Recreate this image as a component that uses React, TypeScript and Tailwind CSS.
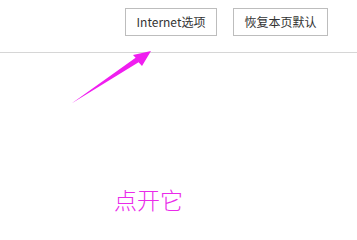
export default function App() {
  return (
    <div
      className="relative w-[357px] h-[220px] bg-white overflow-hidden"
      style={{ fontFamily: '"Noto Sans CJK SC", "Noto Sans", sans-serif' }}
    >
      {/* top toolbar */}
      <div className="h-[53px] border-b border-[#d6d6d6] flex justify-end items-start pt-[8px] pr-[29px] gap-[16px]">
        <button className="h-[28px] w-[92px] border border-[#bdbdbd] bg-white text-[12px] text-[#333] leading-none">
          Internet选项
        </button>
        <button className="h-[28px] w-[95px] border border-[#bdbdbd] bg-white text-[12px] text-[#333] leading-none">
          恢复本页默认
        </button>
      </div>

      {/* annotation arrow */}
      <svg className="absolute left-0 top-0" width="357" height="220" viewBox="0 0 357 220">
        <polygon
          points="71.5,103.5 135.6,57.8 133,55 151,51 142,66 138.6,62.2"
          fill="#f01ef0"
        />
      </svg>

      <div className="pl-[114px] pt-[135px] text-[23px] leading-none font-light text-[#ea2aea]">点开它</div>
    </div>
  );
}
